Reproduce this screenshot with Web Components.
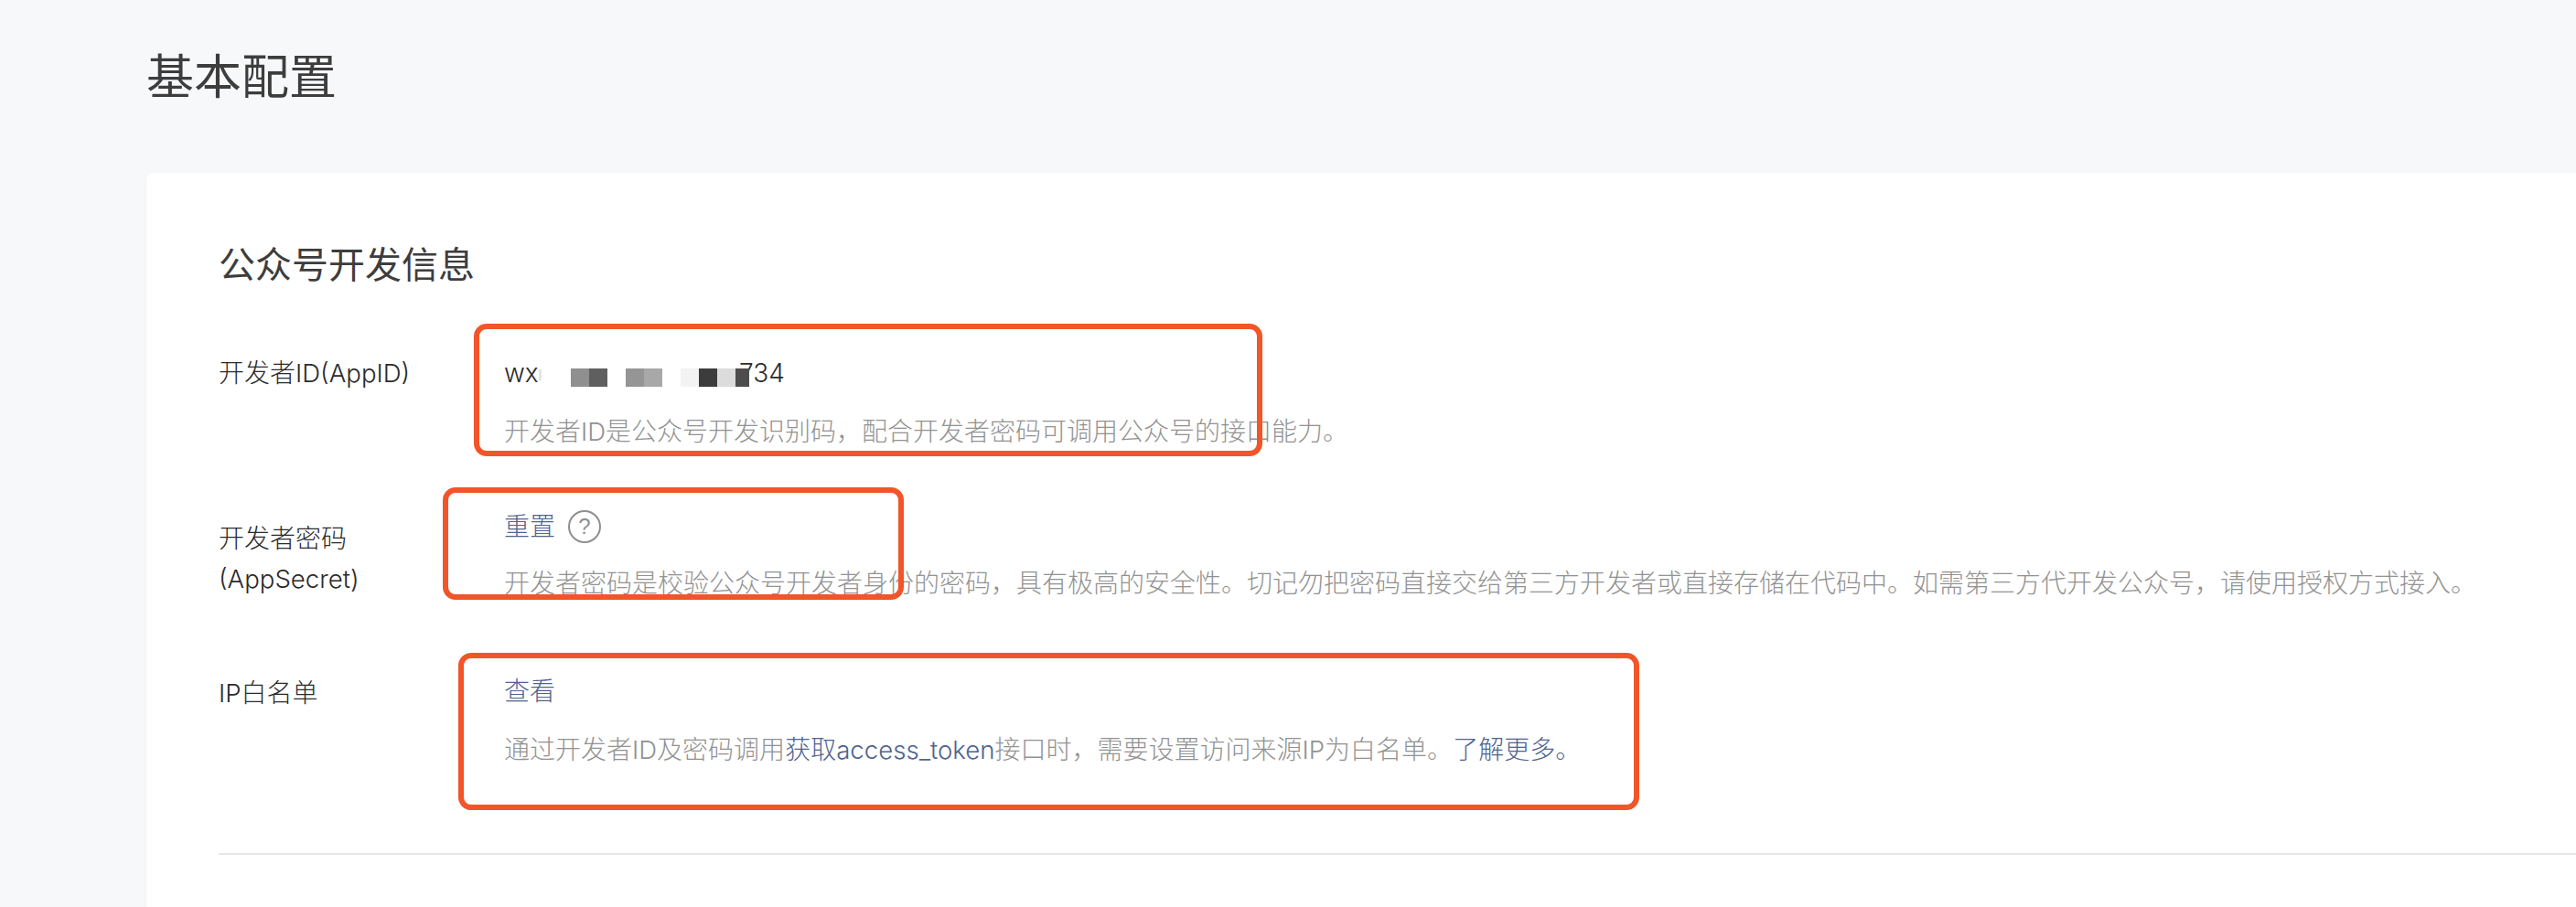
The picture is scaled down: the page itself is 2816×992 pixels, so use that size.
<!DOCTYPE html>
<html lang="zh-CN">
<head>
<meta charset="utf-8">
<title>基本配置</title>
<style>
html,body{margin:0;padding:0;height:992px;overflow:hidden;background:#f7f8fa;}
body{font-family:Inter,"Noto Sans CJK SC",sans-serif;font-weight:300;color:#353535;position:relative;}
</style>
</head>
<body>
<template id="t-page"><style>
:host{display:block;padding:49px 0 0 160px;}
h1{margin:0 0 68px;font-size:52px;line-height:72px;font-weight:400;color:#3d3d3d;}
</style><h1><slot name="title"></slot></h1><slot></slot></template>

<template id="t-card"><style>
:host{display:block;background:#fff;border-radius:8px 0 0 8px;padding:73px 0 120px 79px;box-shadow:0 1px 4px rgba(0,0,0,.03);}
h2{margin:0 0 68px;font-size:40px;line-height:56px;font-weight:400;color:#3d3d3d;}
.line{height:2px;background:#e7e7eb;margin-top:91px;}
</style><h2><slot name="heading"></slot></h2><slot></slot><div class="line"></div></template>

<template id="t-row"><style>
:host{display:grid;grid-template-columns:312px 1fr;font-size:28px;line-height:44px;}
.label{color:#2b2b2b;padding-top:var(--label-top,0);}
.value{display:flex;flex-direction:column;}
.main{display:flex;align-items:center;height:44px;}
.desc{color:#929292;margin-top:var(--desc-gap,20px);white-space:nowrap;}
</style><div class="label"><slot name="label"></slot></div><div class="value"><div class="main"><slot name="main"></slot></div><div class="desc"><slot name="desc"></slot></div></div></template>

<template id="t-link"><style>:host{display:inline;color:#4f648f;cursor:pointer;}</style><slot></slot></template>

<template id="t-latin"><style>:host{display:inline;font-size:var(--latin-size,27.6px);}</style><slot></slot></template>

<template id="t-help"><style>
:host{display:inline-flex;align-items:center;justify-content:center;box-sizing:border-box;width:36px;height:36px;margin-left:14px;border:2px solid #8f8f8f;border-radius:50%;color:#8f8f8f;font:300 24px/32px "Liberation Sans",sans-serif;}
</style>?</template>

<template id="t-mask"><style>
:host{display:flex;align-items:center;color:#2b2b2b;}
.cell{display:block;width:20px;height:20px;flex:none;margin-top:10px;}
.w{width:34px;flex:none;}
.faint{width:3px;height:12px;flex:none;background:#e4e4e4;margin:4px 0 0 4px;}
.end{flex:none;margin-left:-11px;}
.last{width:15px;position:relative;z-index:1;}
</style><span class="w">wx</span><span class="faint"></span><span class="cell" style="margin-left:32px;background:#8f8f8f"></span><span class="cell" style="background:#5f5f5f"></span><span class="cell" style="margin-left:20px;background:#959595"></span><span class="cell" style="background:#a8a8a8"></span><span class="cell" style="margin-left:20px;background:#f3f3f3"></span><span class="cell" style="background:#3c3c3c"></span><span class="cell" style="background:#dcdcdc"></span><span class="cell last" style="background:#4d4d4d"></span><span class="end"><slot></slot></span></template>

<template id="t-mark"><style>:host{position:absolute;box-sizing:border-box;border:6px solid #f25529;border-radius:14px;pointer-events:none;}</style></template>

<config-page>
  <span slot="title">基本配置</span>
  <info-card>
    <span slot="heading">公众号开发信息</span>
    <info-row style="--desc-gap:20px">
      <span slot="label">开发者<la-tin>ID(AppID)</la-tin></span>
      <masked-id slot="main">734</masked-id>
      <span slot="desc">开发者<la-tin>ID</la-tin>是公众号开发识别码，配合开发者密码可调用公众号的接口能力。</span>
    </info-row>
    <info-row style="margin-top:60px;--desc-gap:18px;--label-top:13px">
      <span slot="label" style="display:block">开发者密码<span style="display:block;line-height:45px"><la-tin>(AppSecret)</la-tin></span></span>
      <span slot="main" style="display:flex;align-items:center"><text-link>重置</text-link><help-icon></help-icon></span>
      <span slot="desc">开发者密码是校验公众号开发者身份的密码，具有极高的安全性。切记勿把密码直接交给第三方开发者或直接存储在代码中。如需第三方代开发公众号，请使用授权方式接入。</span>
    </info-row>
    <info-row style="margin-top:74px;--desc-gap:20px;--label-top:2px">
      <span slot="label"><la-tin>IP</la-tin>白名单</span>
      <text-link slot="main">查看</text-link>
      <span slot="desc">通过开发者<la-tin>ID</la-tin>及密码调用<text-link>获取<la-tin>access_token</la-tin></text-link>接口时，需要设置访问来源<la-tin>IP</la-tin>为白名单。<text-link>了解更多。</text-link></span>
    </info-row>
  </info-card>
</config-page>
<mark-box style="left:518px;top:354px;width:862px;height:145px"></mark-box>
<mark-box style="left:484px;top:533px;width:504px;height:123px"></mark-box>
<mark-box style="left:501px;top:714px;width:1291px;height:172px"></mark-box>

<script>
const reg=(name,id)=>customElements.define(name,class extends HTMLElement{
  constructor(){super();this.attachShadow({mode:'open'}).appendChild(document.getElementById(id).content.cloneNode(true));}
});
reg('config-page','t-page');
reg('info-card','t-card');
reg('info-row','t-row');
reg('text-link','t-link');
reg('la-tin','t-latin');
reg('help-icon','t-help');
reg('masked-id','t-mask');
reg('mark-box','t-mark');
</script>
</body>
</html>
